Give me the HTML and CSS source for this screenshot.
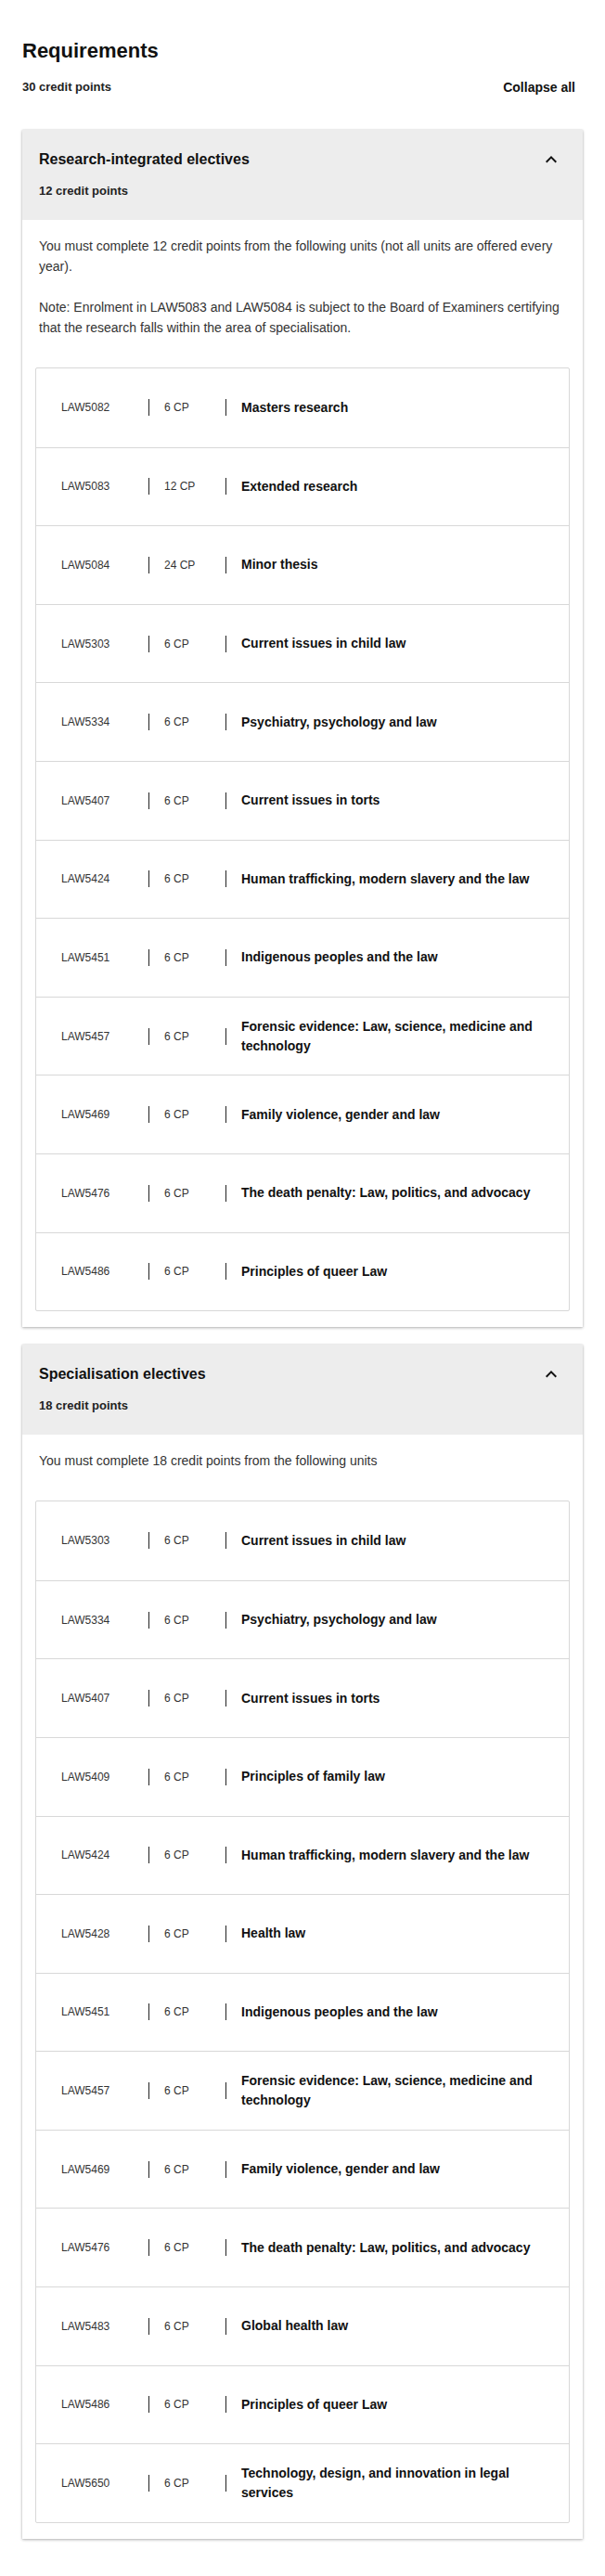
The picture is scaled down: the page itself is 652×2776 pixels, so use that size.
FILE: index.html
```html
<!DOCTYPE html>
<html lang="en">
<head>
    <meta charset="UTF-8">
    <meta name="viewport" content="width=device-width, initial-scale=1.0">
    <title>Requirements</title>
    <link rel="stylesheet" href="styles.css">
</head>
<body>
    <div class="requirements">
        <h1>Requirements</h1>
        <div class="meta">
            <span class="total">30 credit points</span>
            <button class="collapse-all">Collapse all</button>
        </div>

        <div class="section">
            <div class="section-head">
                <div class="section-title">
                    <h2>Research-integrated electives</h2>
                    <svg class="chevron" viewBox="0 0 24 24" width="24" height="24"><path d="M12 8l-6 6 1.41 1.41L12 10.83l4.59 4.58L18 14z"/></svg>
                </div>
                <div class="section-points">12 credit points</div>
            </div>
            <div class="section-body">
                <p>You must complete 12 credit points from the following units (not all units are offered every year).</p>
                <p>Note: Enrolment in LAW5083 and LAW5084 is subject to the Board of Examiners certifying that the research falls within the area of specialisation.</p>
                <div class="units">
                    <div class="unit"><span class="code">LAW5082</span><span class="sep"></span><span class="cp">6 CP</span><span class="sep"></span><span class="name">Masters research</span></div>
                    <div class="unit"><span class="code">LAW5083</span><span class="sep"></span><span class="cp">12 CP</span><span class="sep"></span><span class="name">Extended research</span></div>
                    <div class="unit"><span class="code">LAW5084</span><span class="sep"></span><span class="cp">24 CP</span><span class="sep"></span><span class="name">Minor thesis</span></div>
                    <div class="unit"><span class="code">LAW5303</span><span class="sep"></span><span class="cp">6 CP</span><span class="sep"></span><span class="name">Current issues in child law</span></div>
                    <div class="unit"><span class="code">LAW5334</span><span class="sep"></span><span class="cp">6 CP</span><span class="sep"></span><span class="name">Psychiatry, psychology and law</span></div>
                    <div class="unit"><span class="code">LAW5407</span><span class="sep"></span><span class="cp">6 CP</span><span class="sep"></span><span class="name">Current issues in torts</span></div>
                    <div class="unit"><span class="code">LAW5424</span><span class="sep"></span><span class="cp">6 CP</span><span class="sep"></span><span class="name">Human trafficking, modern slavery and the law</span></div>
                    <div class="unit"><span class="code">LAW5451</span><span class="sep"></span><span class="cp">6 CP</span><span class="sep"></span><span class="name">Indigenous peoples and the law</span></div>
                    <div class="unit"><span class="code">LAW5457</span><span class="sep"></span><span class="cp">6 CP</span><span class="sep"></span><span class="name">Forensic evidence: Law, science, medicine and technology</span></div>
                    <div class="unit"><span class="code">LAW5469</span><span class="sep"></span><span class="cp">6 CP</span><span class="sep"></span><span class="name">Family violence, gender and law</span></div>
                    <div class="unit"><span class="code">LAW5476</span><span class="sep"></span><span class="cp">6 CP</span><span class="sep"></span><span class="name">The death penalty: Law, politics, and advocacy</span></div>
                    <div class="unit"><span class="code">LAW5486</span><span class="sep"></span><span class="cp">6 CP</span><span class="sep"></span><span class="name">Principles of queer Law</span></div>
                </div>
            </div>
        </div>

        <div class="section">
            <div class="section-head">
                <div class="section-title">
                    <h2>Specialisation electives</h2>
                    <svg class="chevron" viewBox="0 0 24 24" width="24" height="24"><path d="M12 8l-6 6 1.41 1.41L12 10.83l4.59 4.58L18 14z"/></svg>
                </div>
                <div class="section-points">18 credit points</div>
            </div>
            <div class="section-body">
                <p>You must complete 18 credit points from the following units</p>
                <div class="units">
                    <div class="unit"><span class="code">LAW5303</span><span class="sep"></span><span class="cp">6 CP</span><span class="sep"></span><span class="name">Current issues in child law</span></div>
                    <div class="unit"><span class="code">LAW5334</span><span class="sep"></span><span class="cp">6 CP</span><span class="sep"></span><span class="name">Psychiatry, psychology and law</span></div>
                    <div class="unit"><span class="code">LAW5407</span><span class="sep"></span><span class="cp">6 CP</span><span class="sep"></span><span class="name">Current issues in torts</span></div>
                    <div class="unit"><span class="code">LAW5409</span><span class="sep"></span><span class="cp">6 CP</span><span class="sep"></span><span class="name">Principles of family law</span></div>
                    <div class="unit"><span class="code">LAW5424</span><span class="sep"></span><span class="cp">6 CP</span><span class="sep"></span><span class="name">Human trafficking, modern slavery and the law</span></div>
                    <div class="unit"><span class="code">LAW5428</span><span class="sep"></span><span class="cp">6 CP</span><span class="sep"></span><span class="name">Health law</span></div>
                    <div class="unit"><span class="code">LAW5451</span><span class="sep"></span><span class="cp">6 CP</span><span class="sep"></span><span class="name">Indigenous peoples and the law</span></div>
                    <div class="unit"><span class="code">LAW5457</span><span class="sep"></span><span class="cp">6 CP</span><span class="sep"></span><span class="name">Forensic evidence: Law, science, medicine and technology</span></div>
                    <div class="unit"><span class="code">LAW5469</span><span class="sep"></span><span class="cp">6 CP</span><span class="sep"></span><span class="name">Family violence, gender and law</span></div>
                    <div class="unit"><span class="code">LAW5476</span><span class="sep"></span><span class="cp">6 CP</span><span class="sep"></span><span class="name">The death penalty: Law, politics, and advocacy</span></div>
                    <div class="unit"><span class="code">LAW5483</span><span class="sep"></span><span class="cp">6 CP</span><span class="sep"></span><span class="name">Global health law</span></div>
                    <div class="unit"><span class="code">LAW5486</span><span class="sep"></span><span class="cp">6 CP</span><span class="sep"></span><span class="name">Principles of queer Law</span></div>
                    <div class="unit"><span class="code">LAW5650</span><span class="sep"></span><span class="cp">6 CP</span><span class="sep"></span><span class="name">Technology, design, and innovation in legal services</span></div>
                </div>
            </div>
        </div>
    </div>
</body>
</html>
```

FILE: styles.css
```css
body {
    font-family: "Liberation Sans", Arial, sans-serif;
    margin: 6px 8px 8px;
    background-color: #ffffff;
    color: #333;
}
.requirements {
    background-color: #fff;
    padding: 36px 16px 34px;
    box-shadow: 0 1px 4px rgba(0,0,0,0.22);
}
h1 {
    margin: 0;
    font-size: 22px;
    line-height: 26px;
    font-weight: bold;
    color: #111;
}
.meta {
    display: flex;
    justify-content: space-between;
    align-items: center;
    margin-top: 16px;
    height: 20px;
}
.total {
    font-size: 13px;
    font-weight: bold;
    line-height: 20px;
    color: #222;
}
.collapse-all {
    font-family: inherit;
    font-size: 14px;
    font-weight: bold;
    color: #111;
    background: none;
    border: none;
    padding: 0 8px;
    line-height: 20px;
    cursor: pointer;
}
.section {
    margin-top: 36px;
    background-color: #fff;
    box-shadow: 0 1px 3px rgba(0,0,0,0.3), 0 0 1px rgba(0,0,0,0.15);
}
.section + .section {
    margin-top: 19px;
}
.section-head {
    background-color: #ededed;
    padding: 20px 17px 21px 18px;
}
.section-title {
    display: flex;
    justify-content: space-between;
    align-items: center;
}
h2 {
    margin: 0;
    font-size: 16px;
    line-height: 24px;
    font-weight: bold;
    color: #111;
}
.chevron {
    display: block;
    margin-right: 5px;
    fill: #111;
}
.section-points {
    margin-top: 12px;
    font-size: 13px;
    font-weight: bold;
    line-height: 20px;
    color: #222;
}
.section-body {
    padding: 17px 14px 17px;
}
.section-body p {
    margin: 0 0 22px;
    padding-left: 4px;
    font-size: 14px;
    line-height: 22px;
    color: #333;
}
.section-body p:last-of-type {
    margin-bottom: 32px;
}
.units {
    border: 1px solid #d8d8d8;
    border-radius: 2px;
}
.unit {
    display: flex;
    align-items: center;
    box-sizing: border-box;
    height: 84.6px;
    padding: 0 24px 0 27px;
}
.unit + .unit {
    border-top: 1px solid #d8d8d8;
}
.code {
    width: 94px;
    flex-shrink: 0;
    font-size: 12px;
    line-height: 18px;
    color: #333;
}
.sep {
    width: 1px;
    height: 18px;
    flex-shrink: 0;
    background-color: #222;
}
.cp {
    width: 66px;
    flex-shrink: 0;
    padding-left: 16px;
    font-size: 12px;
    line-height: 18px;
    color: #333;
}
.name {
    flex: 1;
    padding-left: 16px;
    font-size: 14px;
    font-weight: bold;
    line-height: 21px;
    color: #111;
}
```
